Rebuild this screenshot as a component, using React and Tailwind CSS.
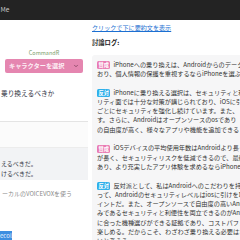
import { ChevronDown } from 'lucide-react';

const Badge = ({ type }) => (
  <span
    className={
      'inline-block align-middle px-[1.5px] mr-[3px] rounded-[1.5px] text-[5.2px] leading-[7.8px] font-bold text-white ' +
      (type === 'pro' ? 'bg-[#e97bb3]' : 'bg-[#2fb0ea]')
    }
  >
    {type === 'pro' ? '賛成' : '反対'}
  </span>
);

const logs = [
  {
    type: 'pro',
    lines: ['iPhoneへの乗り換えは、Androidからのデータ移行も', 'おり、個人情報の保護を重視するならiPhoneを選ぶべき'],
  },
  {
    type: 'con',
    lines: [
      'iPhoneに乗り換える選択は、セキュリティと利便',
      'リティ面では十分な対策が講じられており、iOSに引け',
      'ごとにセキュリティを強化し続けています。また、',
      'す。さらに、Androidはオープンソースのosであり',
      'の自由度が高く、様々なアプリや機能を追加できる',
    ],
  },
  {
    type: 'pro',
    lines: [
      'iOSデバイスの平均使用年数はAndroidより長く',
      'が長く、セキュリティリスクを低減できるので、最新',
      'あり、より充実したアプリ体験を求めるならiPhoneへ',
    ],
  },
  {
    type: 'con',
    lines: [
      '反対派として、私はAndroidへのこだわりを持つ',
      'って、Androidのセキュリティレベルはiosに引けを取',
      'イントだ。また、オープンソースで自由度の高いAnd',
      'みであるセキュリティと利便性を両立できるのがAn',
      'に合った機種選びができる証拠であり、コストパフォ',
      '楽しめる。だからこそ、わざわざ乗り換える必要はな',
      'いと考える。',
    ],
  },
];

export default function App() {
  return (
    <div className="w-[240px] h-[240px] overflow-hidden bg-white font-['Noto_Sans_CJK_JP',sans-serif] text-[#31333f]">
      <div className="h-[20px] bg-[#232323] flex items-center text-[6.5px] text-[#c9c9c9]">
        <span className="pl-[0.5px]">Me</span>
      </div>

      <div className="flex h-[220px]">
        {/* left column */}
        <div className="w-[88px] shrink-0 flex flex-col whitespace-nowrap overflow-hidden">
          <div className="mt-[30px] text-center text-[5.5px] leading-[7px] text-[#7a9e6a]">CommandR</div>
          <div className="mt-[1.5px] mx-[5px] h-[14px] rounded-[2px] bg-[#e586b0] flex items-center justify-between pl-[4px] pr-[4px]">
            <span className="text-[6.2px] font-bold text-[#fdf0f6]">キャラクターを選択</span>
            <ChevronDown size={6} strokeWidth={3} className="text-[#7a3e58]" />
          </div>
          <div className="mt-[3px] h-[46.5px] pt-[13px] border-b border-[#e4e4e4] text-[6.7px] leading-[9px] pl-[1px]">
            乗り換えるべきか
          </div>
          <div className="h-[26px] bg-[#fbfbfb] border-b border-[#ececec]" />
          <div className="h-[32px] bg-[#f2f3f5] pt-[11px] text-[6px] leading-[10px] pl-[1px]">
            <div>えるべきだ。</div>
            <div>けるべきだ。</div>
          </div>
          <div className="mt-[8.5px] text-[6px] leading-[9px] text-[#8a8a8a] pl-[2px]">ーカルのVOICEVOXを使う</div>
          <div className="mt-[33px] text-[6px] leading-[9px]">
            <span className="bg-[#3d8ee0] text-[#e8f2ff]">ecol</span>
          </div>
        </div>

        {/* right column */}
        <div className="ml-[4px] w-[170px] shrink-0 whitespace-nowrap">
          <div className="pt-[2.5px] text-[6.1px] leading-[9px] text-[#1c6fd1] underline">
            クリックで下に要約文を表示
          </div>
          <div className="mt-[6px] text-[6.3px] leading-[9px] font-bold text-[#222]">討論ログ:</div>
          <div className="mt-[8.5px] bg-[#f6f6f7] rounded-[3px] pl-[5px] pt-[4.7px] pb-[6px] flex flex-col gap-[9.3px] text-[6.2px] leading-[9.3px] text-[#333]">
            {logs.map((log, i) => (
              <div key={i}>
                {log.lines.map((line, j) => (
                  <div key={j}>
                    {j === 0 && <Badge type={log.type} />}
                    {line}
                  </div>
                ))}
              </div>
            ))}
          </div>
        </div>
      </div>
    </div>
  );
}
